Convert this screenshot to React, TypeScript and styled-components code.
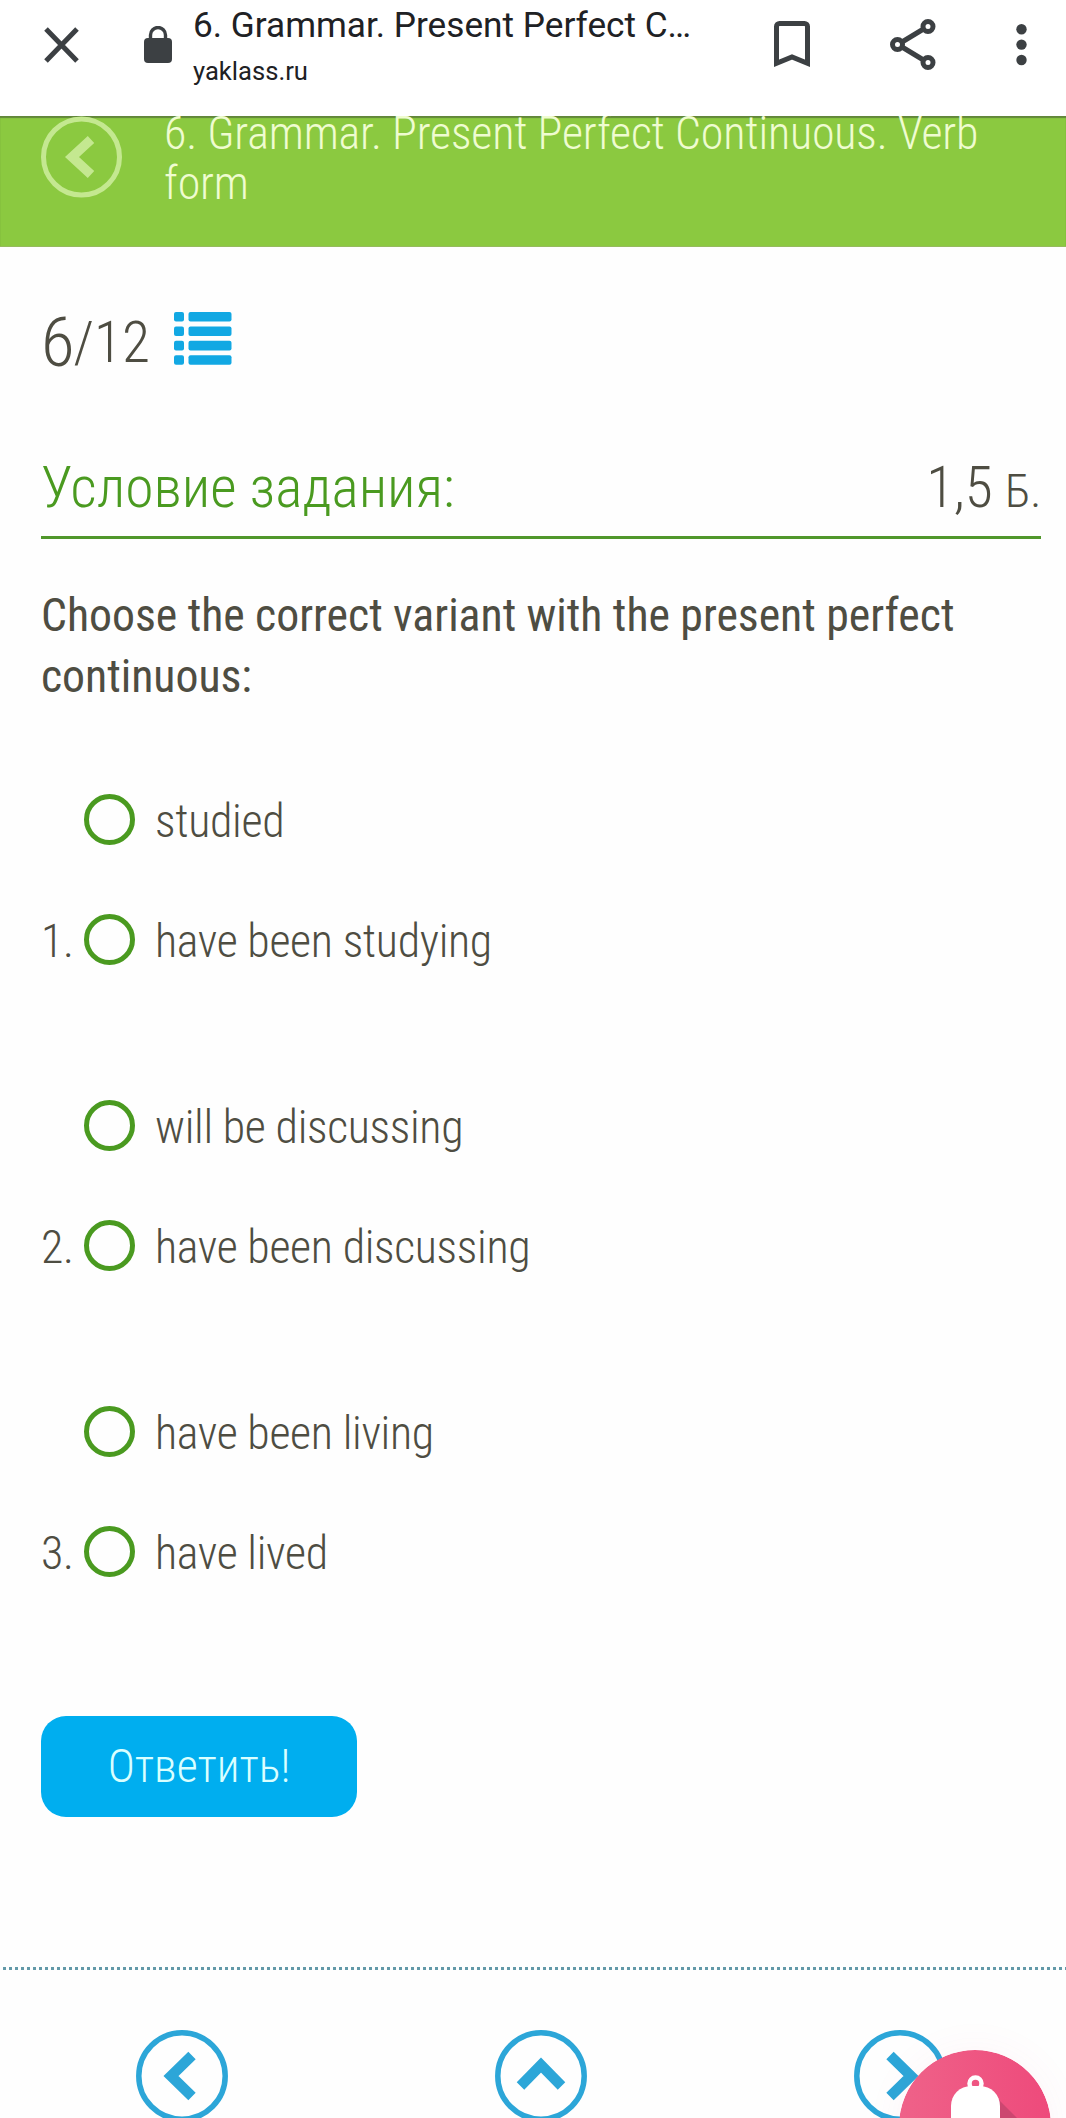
import styled, { createGlobalStyle } from "styled-components";


const GlobalStyle = createGlobalStyle`
    * {
        box-sizing: border-box;
    }

    body {
        margin: 0;
        background: #fefefe;
        font-family: "Roboto Condensed", Roboto, sans-serif;
        font-weight: 300;
        font-stretch: 75%;
        color: #4e4d42;
    }
`;

const Page = styled.div`
    width: 1066px;
    height: 2118px;
    overflow: hidden;
    display: flex;
    flex-direction: column;
`;

const BrowserBar = styled.header`
    flex: none;
    height: 116px;
    display: flex;
    align-items: flex-start;
    background: #fff;
    color: #3c4043;
    font-family: Roboto, sans-serif;
    font-weight: 400;
    font-stretch: 100%;
`;

const BarIcon = styled.svg<{ $left: number; $top: number }>`
    display: block;
    flex: none;
    margin-left: ${({ $left }) => $left}px;
    margin-top: ${({ $top }) => $top}px;
`;

const PageInfo = styled.div`
    width: 501px;
    flex: none;
    margin-left: 21px;
    padding-top: 5px;
    color: #202124;
    white-space: nowrap;
`;

const PageTitle = styled.div`
    font-size: 35.2px;
    line-height: 40px;
`;

const PageHost = styled.div`
    margin-top: 9px;
    font-size: 25.6px;
    line-height: 34px;
`;

const TopicBar = styled.div`
    flex: none;
    height: 131px;
    display: flex;
    align-items: flex-start;
    padding-left: 41px;
    overflow: hidden;
    background: #8bc940;
    border-bottom: 1px solid #96ba5e;
    box-shadow: inset 0 2px 1px #62873a;
    color: #effcd0;
`;

const TopicTitle = styled.h1`
    margin: -8px 0 0 42px;
    font-size: 46px;
    line-height: 50px;
    letter-spacing: -0.17px;
    font-weight: 300;
    white-space: nowrap;
`;

const Content = styled.main`
    flex: none;
    height: 1720px;
    padding: 0 25px 0 41px;
`;

const Progress = styled.div`
    display: flex;
    height: 185px;
    padding-top: 56px;
    line-height: 80px;
    white-space: nowrap;
`;

const Current = styled.span`
    margin-right: -1px;
    font-size: 69px;
`;

const Total = styled.span`
    font-size: 57.6px;
`;

const ListIcon = styled.svg`
    display: block;
    margin: 9px 0 0 24px;
`;

const SectionHead = styled.div`
    display: flex;
    justify-content: space-between;
    align-items: baseline;
    height: 107px;
    border-bottom: 3px solid #50972b;
    line-height: 68px;
    padding-top: 22px;
`;

const SectionTitle = styled.h2`
    margin: 0;
    font-size: 57.6px;
    font-weight: 300;
    color: #4a9a20;
`;

const Points = styled.div`
    font-size: 57.6px;
    letter-spacing: -0.3px;

    small {
        font-size: 46.5px;
    }
`;

const Question = styled.p`
    margin: 46px 0 0;
    font-size: 45.8px;
    line-height: 61px;
    letter-spacing: -0.04px;
    font-weight: 400;
    white-space: nowrap;
`;

const Exercises = styled.div`
    display: grid;
    gap: 66px;
    padding-top: 52px;
`;

const Exercise = styled.div`
    display: flex;
    align-items: flex-end;
    height: 240px;
`;

const Line = styled.span`
    padding-top: 4px;
    font-size: 46px;
    line-height: 116px;
    letter-spacing: -0.35px;
    white-space: nowrap;
`;

const Num = styled(Line)`
    width: 43px;
`;

const Option = styled.label`
    display: flex;
    align-items: center;
    height: 120px;

    ${Line} {
        display: block;
    }
`;

const Radio = styled.span`
    width: 51px;
    height: 51px;
    margin-right: 20px;
    border: 5px solid #4a9a20;
    border-radius: 50%;
`;

const Submit = styled.button`
    display: block;
    width: 316px;
    height: 101px;
    margin-top: 105px;
    padding-bottom: 3px;
    border: 0;
    border-radius: 25px;
    background: #00aeef;
    color: #d9ffff;
    font: inherit;
    font-size: 46px;
`;

const Footer = styled.nav`
    position: relative;
    flex: none;
    height: 151px;
    display: flex;
    gap: 267px;
    padding: 63px 0 0 136px;
    background: repeating-linear-gradient(90deg, transparent 0 3px, #6299a8 3px 6px) 0 0 / 100% 3px no-repeat;
`;

const Bell = styled.svg`
    position: absolute;
    left: 899px;
    top: 83px;
    border-radius: 50%;
    box-shadow: 0 0 40px rgba(240, 80, 130, 0.05);
`;

const CircleArrow = ({ angle = 0 }: { angle?: number }) => (
    <svg width="92" height="92" viewBox="-46 -46 92 92" fill="none" stroke="#2ca6d8">
        <circle r="43.2" strokeWidth="5.5" />
        <path d="M10-20.5-11 0 10 20.5" strokeWidth="10.5" transform={`rotate(${angle})`} />
    </svg>
);

const exercises = [
    ["studied", "have been studying"],
    ["will be discussing", "have been discussing"],
    ["have been living", "have lived"],
];

const App = () => {
    return (
        <Page>
            <GlobalStyle />
            <BrowserBar>
                <BarIcon $left={44} $top={27} width="35" height="36" fill="none" stroke="currentColor" strokeWidth="5">
                    <path d="M2 2 33 34M33 2 2 34" />
                </BarIcon>
                <BarIcon $left={65} $top={26} width="28" height="37" fill="currentColor">
                    <rect y="12" width="28" height="25" rx="4" />
                    <path d="M6.5 13V9a7.5 7.5 0 0 1 15 0v4" fill="none" stroke="currentColor" strokeWidth="3.4" />
                </BarIcon>
                <PageInfo>
                    <PageTitle>6. Grammar. Present Perfect C…</PageTitle>
                    <PageHost>yaklass.ru</PageHost>
                </PageInfo>
                <BarIcon $left={80} $top={21} width="36" height="46" fill="none" stroke="currentColor" strokeWidth="5">
                    <path d="M2.5 42.3V5.5a3 3 0 0 1 3-3h25a3 3 0 0 1 3 3v36.8L18 36Z" />
                </BarIcon>
                <BarIcon $left={80} $top={19} width="46" height="52" fill="none" stroke="currentColor" strokeWidth="5">
                    <circle cx="7.5" cy="25.5" r="5" />
                    <circle cx="38" cy="7.5" r="5" />
                    <circle cx="38" cy="43.5" r="5" />
                    <path d="M12 23 33.5 10M12 28l21.500 13" />
                </BarIcon>
                <BarIcon $left={80} $top={24} width="11" height="42" fill="currentColor">
                    <circle cx="5.500" cy="5.2" r="5.200" />
                    <circle cx="5.500" cy="20.600" r="5.200" />
                    <circle cx="5.500" cy="36" r="5.200" />
                </BarIcon>
            </BrowserBar>

            <TopicBar>
                <svg width="81" height="82" fill="none" stroke="#c4e890">
                    <circle cx="40.500" cy="41" r="38" strokeWidth="5" />
                    <path d="M50 23.500 31 41l19 17.500" strokeWidth="9.500" />
                </svg>
                <TopicTitle>
                    6. Grammar. Present Perfect Continuous. Verb
                    <br />
                    form
                </TopicTitle>
            </TopicBar>

            <Content>
                <Progress>
                    <Current>6</Current>
                    <Total>/12</Total>
                    <ListIcon width="58" height="53" fill="#12a8e3">
                        {[0, 14.4, 28.8, 43.2].map((y) => (
                            <g key={y}>
                                <rect y={y} width="10" height="9.600" rx="2" />
                                <rect x="14.500" y={y} width="43" height="9.600" rx="2" />
                            </g>
                        ))}
                    </ListIcon>
                </Progress>

                <SectionHead>
                    <SectionTitle>Условие задания:</SectionTitle>
                    <Points>
                        1,5 <small>Б.</small>
                    </Points>
                </SectionHead>

                <Question>
                    Choose the correct variant with the present perfect
                    <br />
                    continuous:
                </Question>

                <Exercises>
                    {exercises.map((options, i) => (
                        <Exercise key={i}>
                            <Num>{i + 1}.</Num>
                            <div>
                                {options.map((option) => (
                                    <Option key={option}>
                                        <Radio />
                                        <Line>{option}</Line>
                                    </Option>
                                ))}
                            </div>
                        </Exercise>
                    ))}
                </Exercises>

                <Submit>Ответить!</Submit>
            </Content>

            <Footer>
                <CircleArrow />
                <CircleArrow angle={90} />
                <CircleArrow angle={180} />
                <Bell width="152" height="152">
                    <defs>
                        <linearGradient id="bell" x1="0" x2="1">
                            <stop offset="0" stopColor="#ef6289" />
                            <stop offset="1" stopColor="#ee4a7b" />
                        </linearGradient>
                    </defs>
                    <circle cx="76" cy="76" r="76" fill="url(#bell)" />
                    <path d="M98 48 118 68v30H90Z" fill="#cc4770" />
                    <circle cx="76.500" cy="33.500" r="6" fill="none" stroke="#fff" strokeWidth="4.500" />
                    <path d="M52 100V56a20 20 0 0 1 20-20h9a20 20 0 0 1 20 20v44Z" fill="#fff" />
                </Bell>
            </Footer>
        </Page>
    );
};

export default App;
